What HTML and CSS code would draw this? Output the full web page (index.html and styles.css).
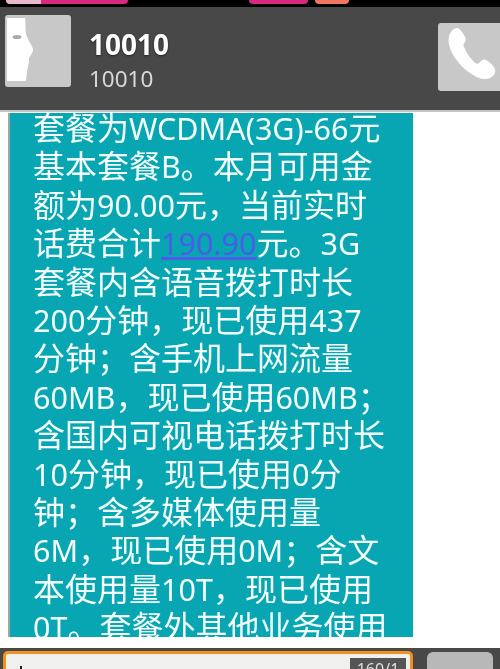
FILE: index.html
```html
<!DOCTYPE html>
<html lang="zh">
<head>
<meta charset="utf-8">
<title>10010</title>
<link rel="stylesheet" href="styles.css">
</head>
<body>
<div class="screen">
  <div class="status">
    <span class="pill pill-a"><span class="pill-tip"></span></span>
    <span class="pill pill-b"></span>
    <span class="pill pill-c"></span>
  </div>
  <header class="contact">
    <div class="avatar">
      <svg viewBox="0 0 66 72" width="66" height="72">
        <rect width="66" height="72" rx="3" fill="#c8c8c8"/>
        <path d="M2 3H20C21 8 20 14 21 19C23 26 28 31 28 35C28 38 25 40 24 44C24 48 23 52 22 56C22 60 21 63 21 66H2Z" fill="#fff"/>
        <ellipse cx="12" cy="22" rx="4.5" ry="2" fill="#a8a8a8"/>
      </svg>
    </div>
    <div class="names">
      <div class="name">10010</div>
      <div class="number">10010</div>
    </div>
    <div class="call">
      <svg viewBox="0 0 62 68" width="62" height="68">
        <path d="M19 5C21 5 23 7 26 12C28 15 28 17 27 19C25 21 25 23 27 26C29 31 33 36 37 40C39 41 41 41 42 39C44 37 46 36 48 37C52 39 55 42 57 46C58 50 56 53 52 55C47 57 41 56 35 52C25 46 15 35 12 25C10 19 10 13 13 9C15 6 17 5 19 5Z" fill="#fff"/>
      </svg>
    </div>
  </header>
  <div class="rule"></div>
  <main class="thread">
    <article class="bubble">
      <div class="text">
        <div>套餐为<span class="lat">WCDMA(3G)-66</span>元</div>
        <div>基本套餐<span class="lat">B</span>。本月可用金</div>
        <div>额为<span class="lat">90.00</span>元，当前实时</div>
        <div>话费合计<a class="link lat" href="#">190.90</a>元。<span class="lat">3G</span></div>
        <div>套餐内含语音拨打时长</div>
        <div><span class="lat">200</span>分钟，现已使用<span class="lat">437</span></div>
        <div>分钟；含手机上网流量</div>
        <div><span class="lat">60MB</span>，现已使用<span class="lat">60MB</span>；</div>
        <div>含国内可视电话拨打时长</div>
        <div><span class="lat">10</span>分钟，现已使用<span class="lat">0</span>分</div>
        <div>钟；含多媒体使用量</div>
        <div><span class="lat">6M</span>，现已使用<span class="lat">0M</span>；含文</div>
        <div>本使用量<span class="lat">10T</span>，现已使用</div>
        <div><span class="lat">0T</span>。套餐外其他业务使用</div>
      </div>
    </article>
  </main>
  <footer class="composer">
    <div class="field">
      <span class="caret"></span>
      <span class="counter">160/1</span>
    </div>
    <div class="send"></div>
  </footer>
</div>
</body>
</html>
```
FILE: styles.css
```css
html, body { margin: 0; padding: 0; background: #fff; }
.screen {
  width: 500px; height: 669px; overflow: hidden;
  display: flex; flex-direction: column;
  font-family: "Noto Sans", "Noto Sans CJK SC", sans-serif;
  filter: blur(0.45px);
}
.status { flex: 0 0 7px; background: #000; display: flex; overflow: hidden; }
.pill { display: block; height: 4px; border-radius: 0 0 4px 4px; }
.pill-a { width: 122px; margin-left: 6px; background: #d9287f; overflow: hidden; }
.pill-tip { display: block; width: 35px; height: 4px; background: #e8b8cc; }
.pill-b { width: 59px; margin-left: 121px; background: #d9287f; }
.pill-c { width: 34px; margin-left: 7px; background: #f0775e; }
.contact {
  flex: 0 0 103px; background: #484848; display: flex; align-items: flex-start;
}
.avatar { margin: 8px 0 0 5px; width: 66px; height: 72px; }
.avatar svg, .call svg { display: block; }
.names { margin: 20px 0 0 18px; color: #fff; }
.name { font-size: 28px; line-height: 34px; font-weight: 700; text-shadow: 0 1px 2px #222; }
.number { font-size: 22.5px; line-height: 35px; color: #d8d8d8; }
.call { margin: 16px 0 0 auto; width: 62px; height: 68px; background: #c8c8c8; border-radius: 3px 0 0 3px; }
.rule { flex: 0 0 2px; background: #c4c4c4; }
.thread { flex: 0 0 536px; background: #fff; overflow: hidden; }
.bubble {
  margin: 1px 0 0 8px; width: 405px; height: 524px; box-sizing: border-box;
  background: #07a6b2; border-left: 2px solid #9aa8aa; overflow: hidden;
}
.text { margin: -4px 0 0 23px; font-size: 32px; line-height: 38.4px; color: #f4ffff; white-space: nowrap; }
.lat { font-size: 30.5px; line-height: 1; }
.link { color: #4a5ce8; text-decoration: underline; }
.composer {
  flex: 1 0 auto; background: #484848; display: flex; align-items: flex-start;
}
.field {
  margin: 3px 0 0 3px; width: 410px; height: 40px; box-sizing: border-box;
  background: #f0f0ee; border: 3px solid #f0921e; border-radius: 5px; position: relative;
}
.caret { position: absolute; left: 14px; top: 12px; width: 2px; height: 20px; background: #222; }
.counter {
  position: absolute; right: 4px; top: 4px; width: 56px; height: 30px;
  background: #555; color: #ddd; font-size: 16px; line-height: 22px; text-align: center;
}
.send { margin: 4px 0 0 14px; width: 66px; height: 40px; background: #b8b8b8; border-radius: 6px; }
```
